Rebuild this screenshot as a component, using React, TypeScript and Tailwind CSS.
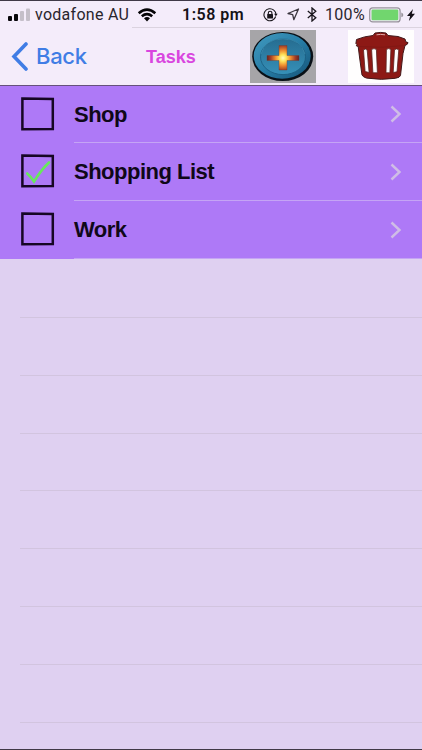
import React from "react";

const tasks = [
  { name: "Shop", done: false },
  { name: "Shopping List", done: true },
  { name: "Work", done: false },
];

function StatusBar() {
  return (
    <div className="flex h-[26px] items-center whitespace-nowrap pl-2 pt-px text-[#29252d]">
      <svg className="w-[22px] shrink-0" height="14" viewBox="0 0 22 14">
        <rect x="0" y="8" width="4" height="5" rx="1" fill="#09070b" />
        <rect x="6" y="6" width="4" height="7" rx="1" fill="#09070b" />
        <rect x="12" y="3" width="4" height="10" rx="1" fill="#c5bfc9" />
        <rect x="18" y="0.5" width="4" height="12.5" rx="1" fill="#c5bfc9" />
      </svg>
      <span className="ml-[5px] w-[95px] text-[16px] tracking-[0.28px]">vodafone AU</span>
      <svg className="ml-[7px] shrink-0" width="20" height="14" viewBox="0 0 20 14" fill="none" stroke="#050406" strokeWidth="2.6">
        <path d="M1.7 5.2Q10-2 18.3 5.2M4.8 8.3Q10 4 15.2 8.3" />
        <path d="M7 10.3Q10 7.8 13 10.3L10 13.4Z" fill="#050406" stroke="none" />
      </svg>
      <span className="ml-[25px] w-[64px] text-[16px] font-semibold tracking-[0.5px] text-[#151217]">1:58 pm</span>
      <svg className="ml-[17px] shrink-0" width="15" height="14" viewBox="0 0 15 14" fill="none" stroke="#19161c" strokeWidth="1.1">
        <path d="M10.8 2.1A6 6 0 1 0 12.7 8.5M10.8 2.1A6 6 0 0 1 13 6.5" />
        <path d="M11.1 5.8h3.6l-1.8 2.5z" fill="#19161c" stroke="none" />
        <rect x="4.2" y="6.1" width="5.8" height="4.3" rx=".5" fill="#19161c" stroke="none" />
        <path d="M5.3 6.3V5a1.8 1.8 0 0 1 3.6 0v1.3" />
      </svg>
      <svg className="ml-[9px] shrink-0" width="13" height="13" viewBox="0 0 13 13" fill="none" stroke="#3b363f" strokeWidth="1.3" strokeLinejoin="round">
        <path d="M11.5 1L1 5.5l4.7 1.2 1.1 5z" />
      </svg>
      <svg className="ml-[7px] shrink-0" width="10" height="15" viewBox="0 0 10 15" fill="none" stroke="#19161c" strokeWidth="1.3">
        <path d="M.8 4l8 6.7L5 14V1l3.8 3.3L.8 11" />
      </svg>
      <span className="ml-[8px] w-[40px] text-[16px] tracking-[0.3px]">100%</span>
      <svg className="ml-[4px] shrink-0" width="35" height="16" viewBox="0 0 35 16">
        <rect x=".7" y=".9" width="30.4" height="14" rx="3" fill="#f2e9f8" stroke="#98939c" strokeWidth="1.2" />
        <rect x="2.5" y="2.6" width="26.8" height="10.6" rx="1.2" fill="#71d66e" />
        <path d="M32.3 5.6q2 .6 2 2.3t-2 2.3z" fill="#98939c" />
      </svg>
      <svg className="ml-[3px] shrink-0" width="8" height="12" viewBox="0 0 8 12" fill="#141017">
        <path d="M6 0L0 7h3.1L1.9 12 8 4.8H4.8z" />
      </svg>
    </div>
  );
}

function AddIcon() {
  return (
    <svg className="block h-[53px] w-[66px]" viewBox="0 0 66 53">
      <defs>
        <linearGradient id="rim" x1="0" y1="0" x2="1" y2="1">
          <stop stopColor="#429bc0" />
          <stop offset=".5" stopColor="#277da6" />
          <stop offset="1" stopColor="#155378" />
        </linearGradient>
        <linearGradient id="face" x1="0" y1="0" x2="0" y2="1">
          <stop stopColor="#266d91" />
          <stop offset="1" stopColor="#3690b8" />
        </linearGradient>
        <radialGradient id="glow" gradientUnits="userSpaceOnUse" cx="33" cy="28" r="16.5">
          <stop stopColor="#fffbc2" />
          <stop offset=".2" stopColor="#ffe45b" />
          <stop offset=".45" stopColor="#f08f30" />
          <stop offset=".75" stopColor="#a33c24" />
          <stop offset="1" stopColor="#5b2025" />
        </radialGradient>
      </defs>
      <rect width="66" height="53" fill="#a6a5a8" />
      <ellipse cx="32.7" cy="26.5" rx="30.5" ry="24.6" fill="#091017" />
      <ellipse cx="32.2" cy="25.9" rx="28.5" ry="22.8" fill="url(#rim)" />
      <ellipse cx="33" cy="26.8" rx="22.5" ry="17.8" fill="url(#face)" stroke="#195b7e" strokeWidth=".8" />
      <path d="M11 24Q15 9 33 9T55 24" fill="none" stroke="#4b9bbb" strokeWidth=".5" />
      <path d="M29 15.5h8v10h12v5H37v9.5h-8v-9.5H17v-5h12z" fill="url(#glow)" stroke="#753d30" strokeWidth=".4" />
    </svg>
  );
}

function TrashIcon() {
  return (
    <svg className="block h-[53px] w-[66px]" viewBox="0 0 66 53">
      <rect width="66" height="53" fill="#fffefe" />
      <path d="M25 5.5l2-2.5q6-1.2 11 0l2 2.5 10 1 7 2.5.8 2.8 2.2.8-.7 1.6-2.3 1.3-2 8-2.5 22q-.5 2-5 2.8-14 2.2-29-.2-3.5-1-4.5-3.1l-2.5-18-1.3-10.5-1.9-.7.6-1.3-1-1 .6-4 8-2.6z" fill="#8d1915" stroke="#42191a" strokeWidth="1" strokeLinejoin="round" />
      <path d="M28.5 4.8q4-.8 8.5 0" fill="none" stroke="#dfaaa6" strokeWidth="1" />
      <path d="M10.5 16.5Q33 18.5 57 15.5" fill="none" stroke="#7e1613" strokeWidth=".8" />
      <path d="M15.5 20q1.8-2 3.7 0l1.9 22.5-4-1zM23.6 19.5q2.4-1.8 4.8 0l1 23.3h-4.5zM38.4 19.5q2.3-1.8 4.5 0l-1 23.3H38zM46.5 19.8q2-1.8 4.3 0L49 41.8l-3.8.7z" fill="#fff" stroke="#5a2522" strokeWidth=".8" />
    </svg>
  );
}

function Checkbox({ done }: { done: boolean }) {
  return (
    <svg className="relative -top-px ml-[21px] shrink-0" width="34" height="34" viewBox="0 0 34 34">
      <path d="M1.4 1.6l30.4.3v30.2l-30.4.2z" fill="none" stroke="#160624" strokeWidth="2.5" />
      {done && <path d="M6.2 19.5q3.5 3 6.8 8Q20 16 28 8.5" fill="none" stroke="#67e95b" strokeWidth="2.6" strokeLinecap="round" />}
    </svg>
  );
}

export default function App() {
  return (
    <main className="flex h-[750px] w-[422px] flex-col overflow-hidden border-y border-[#403947] bg-[#dfd0f1] font-['Roboto',sans-serif]">
      <header className="h-[85px] shrink-0 border-b border-[#66517c] bg-[#f4ecfa]">
        <StatusBar />
        <div className="ml-[132px] h-px bg-[#dbd3df]" />
        <nav className="mt-px flex h-[56px] items-center pb-px">
          <button className="flex w-[146px] items-center text-[#407de5]">
            <svg className="ml-[11px] shrink-0" width="18" height="29" viewBox="0 0 18 29">
              <path d="M15 2L3 14.5 15 27" fill="none" stroke="currentColor" strokeWidth="3.6" strokeLinecap="round" />
            </svg>
            <span className="ml-[7px] font-['Inter',sans-serif] text-[22px] font-medium tracking-[-0.3px]">Back</span>
          </button>
          <h1 className="w-[104px] pt-px font-['Liberation_Sans',sans-serif] text-[18px] font-bold text-[#d946df]">Tasks</h1>
          <button aria-label="Add task"><AddIcon /></button>
          <button className="ml-8" aria-label="Delete task"><TrashIcon /></button>
        </nav>
      </header>
      <div className="h-[173px] shrink-0 bg-[#ae79f7]">
        {tasks.map((task) => (
          <div key={task.name} className="flex h-[58px] items-center first:h-[57px]">
            <Checkbox done={task.done} />
            <div className="ml-[19px] flex h-full flex-1 items-center border-b border-[#c5a4f5]">
              <span className="flex-1 font-['Liberation_Sans',sans-serif] text-[22px] font-bold tracking-[-0.5px] text-[#100819]">{task.name}</span>
              <svg className="mr-[20px]" width="12" height="18" viewBox="0 0 12 18">
                <path d="M1.5 1.5L9.5 9l-8 7.5" fill="none" stroke="#cfbde6" strokeWidth="2.4" />
              </svg>
            </div>
          </div>
        ))}
      </div>
      <div className="ml-5 pt-px">
        {Array.from({ length: 8 }, (_, i) => (
          <div key={i} className="h-[57.85px] border-b border-[#d2c4df]" />
        ))}
      </div>
    </main>
  );
}
